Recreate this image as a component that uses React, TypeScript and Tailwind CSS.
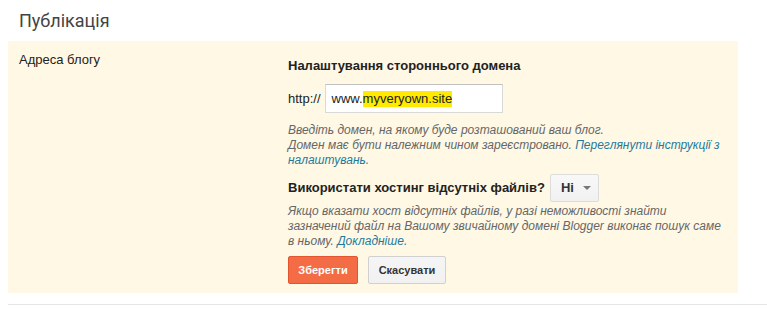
export default function App() {
  const sans = { fontFamily: '"Liberation Sans", Arial, sans-serif' };
  return (
    <div className="w-[767px] h-[315px] bg-white pl-2 overflow-hidden" style={sans}>
      <div className="pt-[8px] pl-[11px] h-[41px] text-[18px] leading-[26px] text-[#444]" style={{ fontFamily: 'Roboto, sans-serif' }}>
        Публікація
      </div>
      <div className="w-[730px] h-[252px] bg-[#fff8e5] flex pt-[11px] pl-[11px]">
        <div className="w-[269px] text-[13px] leading-[16px] text-[#222]">Адреса блогу</div>
        <div className="w-[440px] pt-[6px] flex flex-col">
          <div className="text-[13px] leading-[16px] font-bold text-[#222]">Налаштування стороннього домена</div>
          <div className="flex items-center mt-[10px] gap-[4px]">
            <span className="text-[13px] text-[#222]">http://</span>
            <div className="w-[178px] h-[29px] bg-white border border-[#d9d9d9] border-t-[#c0c0c0] flex items-center pl-[6px] text-[13px] text-[#222]">
              www.<span className="bg-[#ffea00] leading-[16px]">myveryown.site</span>
            </div>
          </div>
          <div className="mt-[10px] text-[12px] leading-[15px] italic text-[#666]">
            Введіть домен, на якому буде розташований ваш блог.
            <br />
            Домен має бути належним чином зареєстровано.{" "}
            <span className="text-[#1e7a9c]">Переглянути інструкції з налаштувань.</span>
          </div>
          <div className="flex items-center mt-[6px] gap-[5px]">
            <span className="text-[13px] font-bold text-[#222]">Використати хостинг відсутніх файлів?</span>
            <div className="w-[49px] h-[28px] bg-gradient-to-b from-[#f8f8f8] to-[#f1f1f1] border border-[#dcdcdc] rounded-[2px] flex items-center pl-[10px] gap-[9px]">
              <span className="text-[13px] font-bold text-[#333]">Ні</span>
              <span className="w-0 h-0 border-l-[4px] border-r-[4px] border-t-[4px] border-l-transparent border-r-transparent border-t-[#777]" />
            </div>
          </div>
          <div className="mt-[2px] text-[12px] leading-[15px] italic text-[#666]">
            Якщо вказати хост відсутніх файлів, у разі неможливості знайти зазначений файл на Вашому звичайному домені Blogger виконає пошук саме в ньому.{" "}
            <span className="text-[#1e7a9c]">Докладніше.</span>
          </div>
          <div className="flex gap-[10px] mt-[7px]">
            <button className="h-[28px] w-[70px] bg-[#f36c46] border border-[#e2552f] rounded-[2px] text-white text-[11px] font-bold">
              Зберегти
            </button>
            <button className="h-[28px] w-[78px] bg-gradient-to-b from-[#f5f5f5] to-[#f1f1f1] border border-[#d0d0d0] rounded-[2px] text-[#333] text-[11px] font-bold">
              Скасувати
            </button>
          </div>
        </div>
      </div>
      <div className="mt-[11px] h-px bg-[#e5e5e5]" />
    </div>
  );
}
